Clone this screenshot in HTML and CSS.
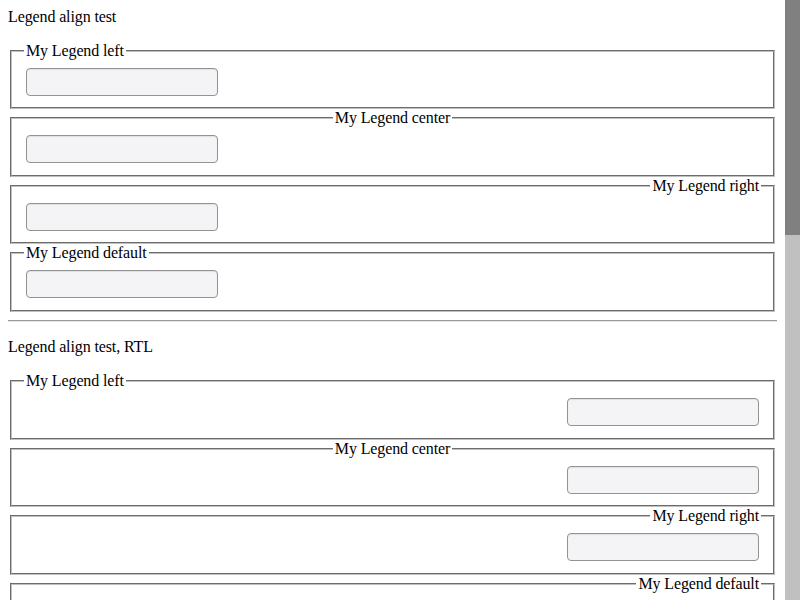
FILE: index.html
```html
<!DOCTYPE html>
<html>
<head>
<meta charset="utf-8">
<link rel="stylesheet" href="styles.css">
</head>
<body>
<div class="title">Legend align test</div>
<div class="group">
  <fieldset><legend class="lg-left">My Legend left</legend><input class="field" type="text"></fieldset>
  <fieldset><legend class="lg-center">My Legend center</legend><input class="field" type="text"></fieldset>
  <fieldset><legend class="lg-right">My Legend right</legend><input class="field" type="text"></fieldset>
  <fieldset><legend>My Legend default</legend><input class="field" type="text"></fieldset>
</div>
<hr class="rule">
<div class="title title-rtl">Legend align test, RTL</div>
<div class="group" dir="rtl">
  <fieldset><legend class="lg-left">My Legend left</legend><input class="field" type="text"></fieldset>
  <fieldset><legend class="lg-center">My Legend center</legend><input class="field" type="text"></fieldset>
  <fieldset><legend class="lg-right">My Legend right</legend><input class="field" type="text"></fieldset>
  <fieldset><legend>My Legend default</legend><input class="field" type="text"></fieldset>
</div>
<div class="scrollbar"><div class="thumb"></div></div>
</body>
</html>
```
FILE: styles.css
```css
html {
  overflow: hidden;
}
body {
  margin: 8px 23px 8px 8px;
  font-family: "Liberation Serif", "Times New Roman", serif;
  font-size: 16px;
  letter-spacing: -0.12px;
  color: #000;
  background: #fff;
}
.title {
  line-height: normal;
}
.title-rtl {
  margin-top: 16.4px;
}
.group {
  margin-top: 16px;
}
fieldset {
  margin: 0 2px;
  padding: 0.35em 0.75em 0.625em;
  border: 2px groove #c0c0c0;
}
legend {
  padding: 0 2px;
  font-size: 16px;
  line-height: normal;
}
.lg-left {
  margin-left: 0;
  margin-right: auto;
}
.lg-center {
  margin-left: auto;
  margin-right: auto;
}
.lg-right {
  margin-left: auto;
  margin-right: 0;
}
.field {
  display: block;
  box-sizing: border-box;
  width: 192px;
  height: 28px;
  margin: 2.1px 2px 1.8px;
  border: 1px solid #939393;
  border-radius: 4px;
  background: #f4f4f6;
  box-shadow: inset 0 1px 1px rgba(0, 0, 0, 0.08);
  font: inherit;
}
.rule {
  margin: 8px 0 0;
  height: 0;
  border: 0;
  border-top: 1px solid #9a9a9a;
  border-bottom: 1px solid #e6e6e6;
}
.scrollbar {
  position: fixed;
  top: 0;
  right: 0;
  width: 15px;
  height: 600px;
  background: #c0c0c0;
}
.thumb {
  height: 235px;
  background: #808080;
}
```
